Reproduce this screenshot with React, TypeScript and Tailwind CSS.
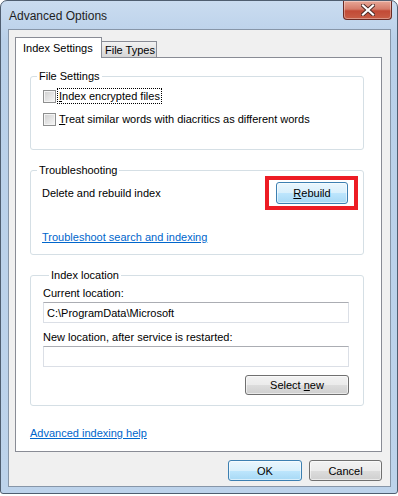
import type { ReactNode } from "react";

const grayBtn =
  "border-[#707070] bg-[linear-gradient(#f2f2f2_0%,#ebebeb_50%,#dddddd_50%,#cfcfcf_100%)]";
const blueBtn =
  "border-[#3c7fb1] bg-[linear-gradient(#eaf6fd_0%,#d9f0fc_50%,#bee6fd_50%,#a7d9f5_100%)]";

function Button({ children, blue, className }: { children: ReactNode; blue?: boolean; className?: string }) {
  return (
    <div
      className={`flex items-center justify-center rounded-[3px] border shadow-[inset_0_0_0_1px_rgba(255,255,255,0.55)] ${
        blue ? blueBtn : grayBtn
      } ${className ?? ""}`}
    >
      {children}
    </div>
  );
}

function Checkbox() {
  return (
    <span className="block w-[13px] h-[13px] shrink-0 border border-[#8e8f8f] bg-[linear-gradient(135deg,#cfcfcf,#f7f7f7)] shadow-[inset_0_0_0_1px_#f4f4f4]" />
  );
}

function Group({ title, children, className }: { title: string; children: ReactNode; className?: string }) {
  return (
    <div className={`flex flex-col border border-[#d5dfe5] rounded-[3px] ${className ?? ""}`}>
      <span className="-mt-[9px] ml-[6px] w-fit px-[2px] bg-white leading-[16px]">{title}</span>
      {children}
    </div>
  );
}

export default function App() {
  return (
    <div className="w-[398px] h-[496px] bg-white text-[11px] leading-[16px] text-black whitespace-nowrap font-['Segoe_UI','Liberation_Sans',Arial,sans-serif]">
      <div className="w-[398px] h-[494px] flex flex-col border border-[#4f5e70] rounded-t-[7px] rounded-b-[3px] overflow-hidden bg-[linear-gradient(#cadcf0,#b9d0e9_40px,#bdd3eb)]">
        {/* title bar */}
        <div className="h-[28px] shrink-0 flex items-start justify-between">
          <span className="pl-[8px] pt-[7px] text-[12px] text-[#1e1e1e]">Advanced Options</span>
          <div className="mr-[5px] w-[49px] h-[19px] flex items-center justify-center rounded-b-[4px] border border-t-0 border-[#6a2a24] bg-[linear-gradient(#e7a797_0%,#d47c6a_45%,#c24a36_55%,#c85e46_100%)] shadow-[inset_0_0_0_1px_rgba(255,255,255,0.35)]">
            <svg width="14" height="12" viewBox="0 0 14 12">
              <path d="M2 1.5 L12 10.5 M12 1.5 L2 10.5" stroke="#4b2a26" strokeWidth="4" strokeLinecap="square" />
              <path d="M2 1.5 L12 10.5 M12 1.5 L2 10.5" stroke="#ffffff" strokeWidth="2.2" strokeLinecap="square" />
            </svg>
          </div>
        </div>

        {/* client area */}
        <div className="flex-1 flex flex-col pl-[7px] pr-[6px] pb-[6px]">
          <div className="flex-1 flex flex-col border border-[#8796a8] bg-[#f0f0f0] pt-[7px] pl-[6px] pr-[8px]">
            {/* tabs */}
            <div className="h-[20px] flex items-end">
              <div className="relative z-10 w-[87px] h-[21px] -mb-[1px] border border-b-0 border-[#898c95] bg-white pl-[7px] pt-[2px]">
                Index Settings
              </div>
              <div className="w-[55px] h-[16px] border border-l-0 border-b-0 border-[#898c95] bg-[linear-gradient(#f2f2f2,#d6d6d6)] pl-[3px] leading-[16px]">
                File Types
              </div>
            </div>

            {/* panel */}
            <div className="flex flex-col border border-[#898c95] bg-white pl-[14px] pr-[17px] pb-[10px]">
              <Group title="File Settings" className="mt-[18px] pb-[22px]">
                <div className="mt-[4px] pl-[12px] flex items-center h-[16px]">
                  <Checkbox />
                  <span className="ml-[1px] px-[1px] border border-dotted border-black leading-[14px]">
                    <span className="underline">I</span>ndex encrypted files
                  </span>
                </div>
                <div className="mt-[7px] pl-[12px] flex items-center h-[16px]">
                  <Checkbox />
                  <span className="ml-[1px] px-[1px] border border-transparent leading-[14px]">
                    <span className="underline">T</span>reat similar words with diacritics as different words
                  </span>
                </div>
              </Group>

              <Group title="Troubleshooting" className="mt-[20px] pb-[9px]">
                <div className="-mt-[2px] pl-[11px] pr-[5px] flex items-center justify-between">
                  <span>Delete and rebuild index</span>
                  <div className="border-[4px] border-[#ed1c24] pt-[2px] pb-[2px] pl-[7px] pr-[6px]">
                    <Button blue className="w-[72px] h-[22px]">
                      <span>
                        <span className="underline">R</span>ebuild
                      </span>
                    </Button>
                  </div>
                </div>
                <span className="mt-[19px] ml-[11px] w-fit text-[#0066cc] underline">Troubleshoot search and indexing</span>
              </Group>

              <Group title="Index location" className="mt-[20px] pl-[12px] pr-[14px] pb-[10px]">
                <span className="mt-[2px]">Current location:</span>
                <div className="mt-[1px] h-[21px] flex items-center pl-[3px] border border-[#dbdfe6] border-t-[#abadb3] bg-white">
                  C:\ProgramData\Microsoft
                </div>
                <span className="mt-[6px]">New location, after service is restarted:</span>
                <div className="mt-[1px] h-[21px] border border-[#dbdfe6] border-t-[#abadb3] bg-white" />
                <Button className="mt-[8px] self-end w-[104px] h-[20px]">
                  <span>
                    Select <span className="underline">n</span>ew
                  </span>
                </Button>
              </Group>

              <span className="mt-[19px] w-fit text-[#0066cc] underline">Advanced indexing help</span>
            </div>

            {/* dialog buttons */}
            <div className="mt-[8px] flex justify-end gap-[7px]">
              <Button blue className="w-[74px] h-[21px]">OK</Button>
              <Button className="w-[73px] h-[21px]">Cancel</Button>
            </div>
          </div>
        </div>
      </div>
    </div>
  );
}
